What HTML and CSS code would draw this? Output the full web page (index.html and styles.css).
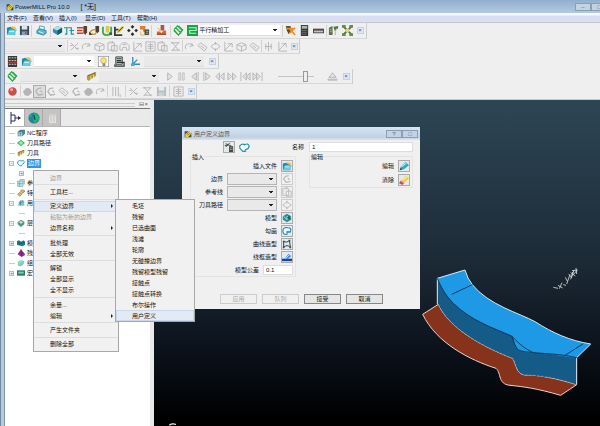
FILE: index.html
```
<!DOCTYPE html>
<html lang="zh-CN">
<head>
    <meta charset="UTF-8">
    <meta name="viewport" content="width=device-width, initial-scale=1.0">
    <title>PowerMILL Pro 10.0</title>
    <link rel="stylesheet" href="styles.css">
</head>
<body>
    <!-- Icon set -->
    <svg class="sprite">
        <symbol id="app" viewBox="0 0 12 12"><path d="M1 2h5l1 2h4v7H1z" fill="#3d474b"/><path d="M2 6l6-5 3 4-4 5-5 1z" fill="#f0d23c"/><path d="M4 6l4-3M5 8l4-3" stroke="#765c16"/></symbol>
        <symbol id="open" viewBox="0 0 12 12"><path d="M1 3l4-1 1 1h4v8H1z" fill="#218ba6"/><path d="M4 5h8l-3 6H1z" fill="#63cddd"/><path d="M6 1l4 1 1 3-4-1z" fill="#f1be55"/><path d="M3 7h6" stroke="#d4f7f9"/></symbol>
        <symbol id="save" viewBox="0 0 12 12"><path d="M1 1h10v10H1z" fill="#3b4b58"/><path d="M3 1h6v4H3z" fill="#d9e8ee"/><path d="M3 7h6v4H3z" fill="#8ba1ac"/><path d="M7 8h1v2H7z" fill="#333"/></symbol>
        <symbol id="print" viewBox="0 0 12 12"><path d="M3 5l1-4 5 1v4z" fill="#e7fbff" stroke="#4b9db5"/><path d="M1 6l3-2 7 2v3l-3 2-7-2z" fill="#58b4cf" stroke="#3a89a4"/><path d="M3 7l5 2" stroke="#e5faff"/></symbol>
        <symbol id="block" viewBox="0 0 12 12"><path d="M1 4l5-3 5 2v5l-5 3-5-3z" fill="#338dab"/><path d="M1 4l5-3 5 2-5 3z" fill="#b0e0ed"/><path d="M6 6v5l5-3V3z" fill="#175973"/></symbol>
        <symbol id="path" viewBox="0 0 12 12"><path d="M1 10h2V3h5v7h3M0 3h3M6 6h5" fill="none" stroke="#2293a4" stroke-width="1.3"/></symbol>
        <symbol id="feed" viewBox="0 0 12 12"><path d="M0 3h7M0 6h6M0 9h7" stroke="#ce3f30" stroke-width="1.5"/><path d="M7 1h4v7L9 11 7 8z" fill="#51452f"/></symbol>
        <symbol id="leads" viewBox="0 0 12 12"><path d="M7 1h4v6L9 9 7 7z" fill="#454237"/><path d="M1 10q0-5 6-5M3 9q3 3 5-1" fill="none" stroke="#d39329" stroke-width="1.5"/><path d="M0 7l4 4H0z" fill="#444"/></symbol>
        <symbol id="ball" viewBox="0 0 12 12"><path d="M1 2v6q0 3 4 3t5-4V2" fill="none" stroke="#3caf48" stroke-width="2"/><path d="M4 1h4v6L6 9 4 7z" fill="#d8c65b"/><path d="M8 8h3v3H8z" fill="#35605d"/></symbol>
        <symbol id="start" viewBox="0 0 12 12"><path d="M1 2v9h8M2 5h3" fill="none" stroke="#373d37" stroke-width="2"/><path d="M4 6l5-5 2 2-5 5-3 1z" fill="#d7bb3b"/><path d="M5 7l5-5" stroke="#40522f"/></symbol>
        <symbol id="nodes" viewBox="0 0 12 12"><path d="M6 0l2 2-2 2-2-2zM6 8l2 2-2 2-2-2zM0 6l2-2 2 2-2 2zM8 6l2-2 2 2-2 2z" fill="#292c2d"/></symbol>
        <symbol id="holder" viewBox="0 0 12 12"><path d="M1 1h6v4H1zM4 5h7v3H5z" fill="#dd8030"/><path d="M6 5h5v6H6z" fill="#47534b"/><path d="M2 7v4h4M8 7h2M8 9h2" fill="none" stroke="#e3af52"/></symbol>
        <symbol id="mill" viewBox="0 0 12 12"><path d="M5 0h4v6H5z" fill="#9b5c4b"/><path d="M1 7h3l2 2 2-3h3v5H1z" fill="#e0662f"/><path d="M1 10h10" stroke="#704737"/><path d="M2 3l3 4" stroke="#ed9d45"/></symbol>
        <symbol id="zig" viewBox="0 0 12 12"><path d="M1 5l4-4 5 5-4 5-5-6M3 3l6 6M6 1l5 5M1 6l5 5" fill="none" stroke="#25ac45" stroke-width="1.4"/></symbol>
        <symbol id="raster" viewBox="0 0 12 12"><path d="M0 0h12v12H0z" fill="#18a348"/><path d="M2 3h8v3H3v3h7" fill="none" stroke="#a8ffba" stroke-width="1.2"/></symbol>
        <symbol id="fx" viewBox="0 0 12 12"><path d="M1 1h5l1 5-3 4-2-4z" fill="#564e35"/><path d="M5 9l6-6M5 4l6 7M2 4h7" stroke="#f08a23" stroke-width="1.8"/></symbol>
        <symbol id="calc" viewBox="0 0 12 12"><path d="M2 0h8v12H2z" fill="#363a38"/><path d="M3 1h6v3H3z" fill="#aeb6ac"/><path d="M3 6h6M3 8h6M3 10h6" stroke="#949991" stroke-dasharray="1 1"/></symbol>
        <symbol id="ruler" viewBox="0 0 12 12"><path d="M0 4h12v5H0z" fill="#504747"/><path d="M1 6h10v2H1z" fill="#d5cfcf"/><path d="M2 5v2M4 5v2M6 5v2M8 5v2M10 5v2" stroke="#544d4d" stroke-width=".6"/></symbol>
        <symbol id="machine" viewBox="0 0 12 12"><path d="M1 3l4-2v10H1zM6 2l5-1v3H9v2H7z" fill="#587452"/><path d="M2 5h2M2 7h2M8 5v6" stroke="#e5af34"/></symbol>
        <symbol id="cross" viewBox="0 0 12 12"><path d="M1 1l10 10M11 1L1 11" stroke="#48664a" stroke-width="2"/><path d="M0 0h4v3H0zM8 0h4v3H8zM0 9h4v3H0zM8 9h4v3H8z" fill="#5d9047"/><path d="M4 4h4v4H4z" fill="#e5d165"/></symbol>
        <symbol id="sheet" viewBox="0 0 12 12"><path d="M1 0h10v12H1z" fill="#3d3838"/><path d="M2 2h8M2 5h8M2 9h8" stroke="#dedddd" stroke-dasharray="2 1"/><path d="M1 7h10" stroke="#a94a42"/></symbol>
        <symbol id="bulb" viewBox="0 0 12 12"><path d="M0 0h12v12H0z" fill="#fafafa" stroke="#5c6268"/><circle cx="6" cy="5" r="3.2" fill="#f4e779" stroke="#a29331" stroke-width=".6"/><path d="M5 8h3v3H5z" fill="#8e8b76"/></symbol>
        <symbol id="layers" viewBox="0 0 12 12"><path d="M2 1h7v8H2z" fill="#d4e3e0" stroke="#2c3533"/><path d="M3 3h5M3 5h5M3 7h8v4H1V9" fill="none" stroke="#2c3533" stroke-width="1.3"/></symbol>
        <symbol id="axes" viewBox="0 0 12 12"><path d="M3 1v8h8M3 9l5-5" fill="none" stroke="#378fb1" stroke-width="1.4"/><path d="M1 8h4v3H1z" fill="#4cabc9"/></symbol>
        <symbol id="tools" viewBox="0 0 12 12"><path d="M1 5l4-1v5l-2 2-2-2zM5 4l3-1v4l-2 2zM8 2l3-1v4L9 7z" fill="#bd9833"/><path d="M2 5l8-3" stroke="#6f5824"/></symbol>
        <symbol id="redball" viewBox="0 0 12 12"><circle cx="6" cy="6" r="4.6" fill="#c7504c"/><circle cx="5" cy="4" r="1.6" fill="#f0aaa3"/></symbol>

        <symbol id="g-cut" viewBox="0 0 12 12"><path d="M2 2l8 8M10 2L2 10M1 5h3M7 8h4" stroke="currentColor" fill="none"/></symbol>
        <symbol id="g-arc" viewBox="0 0 12 12"><path d="M2 9q-2-6 4-6l4 2M8 2l2 3-4 1" stroke="currentColor" fill="none"/></symbol>
        <symbol id="g-cube" viewBox="0 0 12 12"><path d="M1 4l5-2 5 2v5l-5 2-5-2zM1 4l5 2 5-2M6 6v5" stroke="currentColor" fill="none"/></symbol>
        <symbol id="g-paste" viewBox="0 0 12 12"><path d="M1 2h7v8H1zM3 0h3v2M5 5h6v6H5z" stroke="currentColor" fill="none"/></symbol>
        <symbol id="g-hat" viewBox="0 0 12 12"><path d="M1 10V5l3-3h4l3 3v5H8V7H4v3zM4 4h4" stroke="currentColor" fill="none"/></symbol>
        <symbol id="g-grid" viewBox="0 0 12 12"><path d="M1 1h10v10H1zM3 4h6M3 6h6M3 8h6M6 2v8" stroke="currentColor" fill="none"/></symbol>
        <symbol id="g-x" viewBox="0 0 12 12"><path d="M2 1l8 10M10 1L2 11M1 2h9M2 10h9" stroke="currentColor" fill="none"/></symbol>
        <symbol id="g-diamond" viewBox="0 0 12 12"><path d="M1 6l5-4 5 4-5 4zM6 1v3M6 8v3" stroke="currentColor" fill="none"/></symbol>
        <symbol id="g-link" viewBox="0 0 12 12"><path d="M1 5l3-3 7 5-3 4zM4 5l4 3" stroke="currentColor" fill="none"/></symbol>
        <symbol id="g-axis" viewBox="0 0 12 12"><path d="M2 1v10h9M2 10l8-8M5 3h5v4" stroke="currentColor" fill="none"/></symbol>
        <symbol id="g-plus" viewBox="0 0 12 12"><path d="M6 1v10M2 6h8M3 3v6M9 3v6" stroke="currentColor" fill="none"/></symbol>
        <symbol id="g-blob" viewBox="0 0 12 12"><path d="M1 6l4-4 4 1 2 4-4 4-4-1z" fill="currentColor"/></symbol>
        <symbol id="g-c" viewBox="0 0 12 12"><path d="M8 2L4 3 2 6l3 4 5-1M7 5l2 2" stroke="currentColor" stroke-width="1.4" fill="none"/></symbol>
        <symbol id="g-bars" viewBox="0 0 12 12"><path d="M2 1v10M5 1v10M8 1v10M10 9v3" stroke="currentColor" fill="none"/></symbol>
        <symbol id="p-play" viewBox="0 0 12 12"><path d="M4 2l5 4-5 4z" stroke="currentColor" fill="#e2e2e2"/></symbol>
        <symbol id="p-pause" viewBox="0 0 12 12"><path d="M3 2h2v8H3zM7 2h2v8H7z" stroke="currentColor" stroke-width=".7" fill="#e2e2e2"/></symbol>
        <symbol id="p-back" viewBox="0 0 12 12"><path d="M8 2L3 6l5 4zM10 1v10" stroke="currentColor" fill="#e2e2e2"/></symbol>
        <symbol id="p-step" viewBox="0 0 12 12"><path d="M4 2l5 4-5 4zM2 1v10" stroke="currentColor" fill="#e2e2e2"/></symbol>
        <symbol id="p-rew" viewBox="0 0 12 12"><path d="M6 2L2 6l4 4zM11 2L7 6l4 4z" stroke="currentColor" fill="#e2e2e2"/></symbol>
        <symbol id="p-ff" viewBox="0 0 12 12"><path d="M1 2l4 4-4 4zM6 2l4 4-4 4z" stroke="currentColor" fill="#e2e2e2"/></symbol>
        <symbol id="p-first" viewBox="0 0 12 12"><path d="M7 2L3 6l4 4zM11 2L7 6l4 4zM1 1v10" stroke="currentColor" fill="#e2e2e2"/></symbol>
        <symbol id="p-last" viewBox="0 0 12 12"><path d="M1 2l4 4-4 4zM5 2l4 4-4 4zM11 1v10" stroke="currentColor" fill="#e2e2e2"/></symbol>
        <symbol id="p-eject" viewBox="0 0 12 12"><path d="M2 7l4-5 4 5zM1 9h10v1H1z" stroke="currentColor" fill="#e2e2e2"/></symbol>

        <symbol id="tree" viewBox="0 0 12 12"><path d="M2 0v12M2 3h4v6M2 9h4M6 6h3" fill="none" stroke="#242760"/><path d="M9 4l3 2-3 2z" fill="#242760"/></symbol>
        <symbol id="globe" viewBox="0 0 12 12"><circle cx="6" cy="6" r="5.6" fill="#25819e"/><path d="M6 1q5 1 5 6l-4 4q-3-3-1-5zM1 4l3-3-1 5z" fill="#2bb36c"/><path d="M6 3l1 5" stroke="#123f66"/></symbol>
        <symbol id="bin" viewBox="0 0 12 12"><path d="M3 2h7v9H3z" fill="#e6e3dc"/><path d="M2 3h9M5 4v6M8 4v6" stroke="#c3bfb5"/></symbol>
        <symbol id="nc" viewBox="0 0 12 12"><path d="M1 4l4-3h7v6l-4 4H1z" fill="#4a8694"/><path d="M2 5h6v5H2z" fill="#bcdde1"/><path d="M2 7h6M5 5v5M3 3h7" stroke="#3a7484" stroke-width=".8"/></symbol>
        <symbol id="tp" viewBox="0 0 12 12"><path d="M0 6l6-5 6 5-6 5z" fill="#40bd68"/><path d="M3 6h6M6 3v6" stroke="#d6ffdf" stroke-width="1.2"/></symbol>
        <symbol id="cloud" viewBox="0 0 12 12"><path d="M3 9Q0 7 1 4q3-3 5-1 4-2 5 1 0 3-3 4-2 1-1 2-3 1-4-1z" fill="#f3feff" stroke="#2392ae" stroke-width="1.3"/></symbol>
        <symbol id="pattern" viewBox="0 0 12 12"><path d="M1 3h8v8H1zM4 1h7v7M4 3v8M1 7h8" fill="#cbe8ee" stroke="#609dad"/></symbol>
        <symbol id="feature" viewBox="0 0 12 12"><path d="M5 3l3-2 4 2-3 3zM1 8l3-3 4 2-4 4z" fill="#dbb555" stroke="#78602c" stroke-width=".8"/></symbol>
        <symbol id="ucs" viewBox="0 0 12 12"><path d="M2 5l6-4 3 2v7H4z" fill="#7cc0cd"/><path d="M1 10l8-7M5 2v8" stroke="#367d91"/></symbol>
        <symbol id="level" viewBox="0 0 12 12"><path d="M1 5l5-4 5 3v4l-5 4-5-4z" fill="#54947b"/><path d="M3 5l3-2 3 2-3 2z" fill="#d3eadc"/></symbol>
        <symbol id="model" viewBox="0 0 12 12"><path d="M0 3l3-1 3 2 4-2 2 2v5l-4 2-3-1-5-1z" fill="#187d8b"/><path d="M1 5l4 2 6-2" stroke="#0b4757" fill="none"/></symbol>
        <symbol id="stock" viewBox="0 0 12 12"><path d="M1 8l2-3 1-2 2-3 3 4 2 2 1 3-5 3z" fill="#8b2a97"/><path d="M6 3l1 7" stroke="#5f156b"/></symbol>
        <symbol id="disc" viewBox="0 0 12 12"><path d="M1 7q1-5 6-5l4 1q0 5-5 8-5 0-5-4z" fill="#78cdb8"/><path d="M3 7q1-3 5-3" stroke="#c6f2e6" fill="none"/></symbol>
        <symbol id="macro" viewBox="0 0 12 12"><path d="M0 2h12v8H0z" fill="#287b68"/><path d="M2 4h8v3H2z" fill="#84c6ac"/></symbol>

        <symbol id="wrench" viewBox="0 0 12 12"><path d="M2 2l7 3M2 6l5-5M1 4h4" stroke="#494949" fill="none" stroke-width="1.2"/><path d="M6 5h5v7H6z" fill="#494949"/><path d="M7 7h3M7 9h3" stroke="#ddd" stroke-dasharray="1 1"/></symbol>
        <symbol id="mesh" viewBox="0 0 12 12"><path d="M1 4l5-3 5 3v4l-5 3-5-3z" fill="#318c94"/><path d="M2 4l4 4V4l4 1" stroke="#b5edef" fill="none"/><path d="M6 5l3-2 1 5z" fill="#155160"/></symbol>
        <symbol id="sketch" viewBox="0 0 12 12"><path d="M6 10q-5 1-5-4t6-4q5 0 3 5H6z" fill="#e2f8ff" stroke="#2383aa" stroke-width="1.3"/><path d="M6 6h4v2H6z" fill="#36a3c8"/></symbol>
        <symbol id="curve" viewBox="0 0 12 12"><path d="M2 10V3q4 2 7-1l1 8q-4-4-8 0" fill="none" stroke="#274454" stroke-width="1.2"/><path d="M1 2h2v2H1zM8 1h2v2H8zM9 9h2v2H9zM1 9h2v2H1z" fill="#354e5d"/></symbol>
        <symbol id="wire" viewBox="0 0 12 12"><path d="M0 8h12v3H0z" fill="#1744a4"/><path d="M3 8l5-6 3 3-4 3z" fill="#438fdb"/><path d="M4 8l5-5" stroke="#d4eaff"/></symbol>
        <symbol id="pencil" viewBox="0 0 12 12"><path d="M1 11l1-4 6-6 4 4-6 5z" fill="#39a8ba"/><path d="M3 7l6-5" stroke="#aaebf1" stroke-width="1.5"/><path d="M1 11l1-3 2 2z" fill="#29424a"/></symbol>
        <symbol id="eraser" viewBox="0 0 12 12"><path d="M2 7l6-6 4 3-6 6z" fill="#f3cb42"/><path d="M2 7l4 3-2 2-4-2z" fill="#d8436c"/><path d="M4 6l5-4" stroke="#fff1a0" stroke-width="1.5"/></symbol>
    </svg>

    <div class="window">
        <header class="titlebar">
            <svg class="icon"><use href="#app"/></svg>
            <span>PowerMILL Pro 10.0</span>
            <span class="project">[ *无]</span>
            <div class="win-buttons">
                <button type="button" aria-label="最小化">–</button>
                <button type="button" aria-label="最大化">□</button>
            </div>
        </header>

        <nav class="menubar">
            <a href="#">文件(F)</a>
            <a href="#">查看(V)</a>
            <a href="#">插入(I)</a>
            <a href="#">显示(D)</a>
            <a href="#">工具(T)</a>
            <a href="#">帮助(H)</a>
        </nav>

        <div class="toolbars">
            <div class="toolbar tb-main">
                <div class="group">
                    <svg class="icon"><use href="#open"/></svg>
                    <svg class="icon"><use href="#save"/></svg>
                </div>
                <div class="group"><svg class="icon"><use href="#print"/></svg></div>
                <div class="group">
                    <svg class="icon"><use href="#block"/></svg>
                    <svg class="icon"><use href="#path"/></svg>
                    <svg class="icon"><use href="#feed"/></svg>
                    <svg class="icon"><use href="#leads"/></svg>
                    <svg class="icon"><use href="#ball"/></svg>
                    <svg class="icon"><use href="#start"/></svg>
                    <svg class="icon"><use href="#nodes"/></svg>
                    <svg class="icon"><use href="#holder"/></svg>
                </div>
                <div class="group"><svg class="icon"><use href="#mill"/></svg></div>
                <div class="group">
                    <svg class="icon"><use href="#zig"/></svg>
                    <div class="strategy">
                        <svg class="icon"><use href="#raster"/></svg>
                        <select class="combo white" aria-label="策略"><option>平行精加工</option></select>
                    </div>
                </div>
                <div class="group">
                    <svg class="icon"><use href="#fx"/></svg>
                    <svg class="icon"><use href="#calc"/></svg>
                    <svg class="icon"><use href="#ruler"/></svg>
                </div>
                <div class="group">
                    <svg class="icon"><use href="#machine"/></svg>
                    <svg class="icon"><use href="#cross"/></svg>
                </div>
                <button type="button" class="close" aria-label="关闭">×</button>
            </div>

            <div class="toolbar tb-path">
                <select class="combo" aria-label="刀具路径"><option></option></select>
                <div class="group off">
                    <svg class="icon"><use href="#g-cut"/></svg>
                    <svg class="icon"><use href="#g-arc"/></svg>
                    <svg class="icon"><use href="#g-cube"/></svg>
                    <svg class="icon"><use href="#g-paste"/></svg>
                    <svg class="icon"><use href="#g-hat"/></svg>
                    <svg class="icon"><use href="#g-axis"/></svg>
                    <svg class="icon"><use href="#g-grid"/></svg>
                    <svg class="icon"><use href="#g-paste"/></svg>
                    <svg class="icon"><use href="#g-x"/></svg>
                </div>
                <div class="group off">
                    <svg class="icon"><use href="#g-arc"/></svg>
                    <svg class="icon"><use href="#g-link"/></svg>
                    <svg class="icon"><use href="#g-diamond"/></svg>
                    <svg class="icon"><use href="#g-axis"/></svg>
                    <svg class="icon"><use href="#g-cube"/></svg>
                    <svg class="icon"><use href="#g-link"/></svg>
                </div>
                <div class="group off">
                    <svg class="icon"><use href="#g-plus"/></svg>
                    <svg class="icon"><use href="#g-axis"/></svg>
                </div>
                <button type="button" class="close" aria-label="关闭">×</button>
            </div>

            <div class="toolbar tb-level">
                <div class="group"><svg class="icon"><use href="#sheet"/></svg></div>
                <div class="group">
                    <svg class="icon"><use href="#open"/></svg>
                    <select class="combo white" aria-label="层"><option></option></select>
                </div>
                <div class="group">
                    <svg class="icon"><use href="#bulb"/></svg>
                    <svg class="icon"><use href="#layers"/></svg>
                </div>
                <div class="group">
                    <svg class="icon"><use href="#axes"/></svg>
                    <select class="combo" aria-label="用户坐标系"><option></option></select>
                </div>
                <button type="button" class="close" aria-label="关闭">×</button>
            </div>

            <div class="toolbar tb-sim">
                <div class="group"><svg class="icon"><use href="#zig"/></svg></div>
                <select class="combo" aria-label="仿真路径"><option></option></select>
                <div class="group"><svg class="icon"><use href="#tools"/></svg></div>
                <select class="combo" aria-label="仿真刀具"><option></option></select>
                <div class="group off">
                    <svg class="icon"><use href="#p-play"/></svg>
                    <svg class="icon"><use href="#p-pause"/></svg>
                    <svg class="icon"><use href="#p-back"/></svg>
                    <svg class="icon"><use href="#p-step"/></svg>
                    <svg class="icon"><use href="#p-rew"/></svg>
                    <svg class="icon"><use href="#p-ff"/></svg>
                    <svg class="icon"><use href="#p-first"/></svg>
                    <svg class="icon"><use href="#p-last"/></svg>
                </div>
                <input type="range" class="speed" aria-label="速度" min="0" max="100" value="80">
                <div class="group off"><svg class="icon"><use href="#p-eject"/></svg></div>
                <button type="button" class="close" aria-label="关闭">×</button>
            </div>

            <div class="toolbar tb-view">
                <div class="group"><svg class="icon"><use href="#redball"/></svg></div>
                <div class="group off">
                    <svg class="icon"><use href="#g-blob"/></svg>
                    <svg class="icon pressed"><use href="#g-c"/></svg>
                    <svg class="icon"><use href="#g-c"/></svg>
                    <svg class="icon"><use href="#g-link"/></svg>
                    <svg class="icon"><use href="#g-c"/></svg>
                    <svg class="icon"><use href="#g-blob"/></svg>
                    <svg class="icon"><use href="#g-arc"/></svg>
                </div>
                <div class="group off"><svg class="icon"><use href="#g-bars"/></svg></div>
                <div class="group off">
                    <svg class="icon"><use href="#g-cut"/></svg>
                    <svg class="icon"><use href="#g-x"/></svg>
                    <svg class="icon"><use href="#save"/></svg>
                </div>
                <div class="group off"><svg class="icon"><use href="#g-grid"/></svg></div>
                <button type="button" class="close" aria-label="关闭">×</button>
            </div>
        </div>

        <main class="workspace">
            <aside class="explorer">
                <div class="grip"><span>⊟×</span></div>
                <div class="tabs">
                    <button type="button" class="tab active" aria-label="浏览器"><svg class="icon"><use href="#tree"/></svg></button>
                    <button type="button" class="tab" aria-label="网页"><svg class="icon"><use href="#globe"/></svg></button>
                    <button type="button" class="tab" aria-label="回收站"><svg class="icon"><use href="#bin"/></svg></button>
                </div>
                <ul class="tree">
                    <li><i></i><svg class="icon"><use href="#nc"/></svg><span>NC程序</span></li>
                    <li><i></i><svg class="icon"><use href="#tp"/></svg><span>刀具路径</span></li>
                    <li><i></i><svg class="icon"><use href="#tools"/></svg><span>刀具</span></li>
                    <li><i class="box">-</i><svg class="icon"><use href="#cloud"/></svg><span class="selected">边界</span></li>
                    <li class="child"><i class="box">+</i></li>
                    <li><i></i><svg class="icon"><use href="#pattern"/></svg><span>参考线</span></li>
                    <li><i></i><svg class="icon"><use href="#feature"/></svg><span>特征</span></li>
                    <li><i class="box">-</i><svg class="icon"><use href="#ucs"/></svg><span>用户</span></li>
                    <li class="child"><i></i></li>
                    <li><i class="box">-</i><svg class="icon"><use href="#level"/></svg><span>层和</span></li>
                    <li class="child"><i></i></li>
                    <li><i class="box">+</i><svg class="icon"><use href="#model"/></svg><span>模型</span></li>
                    <li><i></i><svg class="icon"><use href="#stock"/></svg><span>残留</span></li>
                    <li><i></i><svg class="icon"><use href="#disc"/></svg><span>组</span></li>
                    <li><i class="box">+</i><svg class="icon"><use href="#macro"/></svg><span>宏</span></li>
                </ul>
            </aside>

            <section class="view">
                <!-- Machined part -->
                <svg class="part" viewBox="0 0 570 528">
                    <path d="M38 193L85 163C120 240 230 295 308 325C320 345 318 372 345 375C390 375 440 385 500 404L452 436C380 415 340 410 300 406C262 402 275 370 258 355C180 330 80 280 38 193Z" fill="#87321b" stroke="#e8d5cc" stroke-width="3"/>
                    <path d="M82 85C90 105 105 135 130 160C180 210 250 235 305 258C312 275 315 295 330 302C370 312 440 308 500 323V404C440 380 380 378 345 375C320 372 320 345 308 325C230 295 120 240 85 163Z" fill="#155b88"/>
                    <path d="M82 85V163M500 323V404" stroke="#e9f3f8" stroke-width="3"/>
                    <path d="M85 163C120 240 230 295 308 325C320 345 318 372 345 375C390 375 440 385 500 404" fill="none" stroke="#a8a39f" stroke-width="2" stroke-dasharray="7 5"/>
                    <path d="M82 85L165 60Q172 86 187 104C235 165 330 190 375 215C430 250 480 272 542 282L500 323C440 320 410 305 370 310C345 306 335 306 325 300C312 285 312 265 305 258C250 235 180 210 130 160C105 135 90 105 82 85Z" fill="#1d99e5"/>
                    <path d="M82 85L165 60Q172 86 187 104C235 165 330 190 375 215C430 250 480 272 542 282L500 323" fill="none" stroke="#d3edf9" stroke-width="3"/>
                    <path d="M125 133L187 104M305 258C330 285 350 300 375 310M462 318L520 281M82 85C90 105 105 135 130 160C180 210 250 235 305 258C312 275 315 295 330 302C370 312 440 308 500 323" fill="none" stroke="#123d5d" stroke-width="3"/>
                    <!-- Axis labels -->
                    <path d="M430 112l14 3M444 106l14 8M456 98l-8 18M460 104l8 2M466 82l6 12M480 74l-10 28M476 72l10 12M488 66l-6 22M482 68l14 10M492 60l-6 20M486 62l16-2M490 74l12-14M498 54l2 18" fill="none" stroke="#d8dcde" stroke-width="2.5"/>
                </svg>
                <svg class="marker" viewBox="0 0 10 4"><path d="M0 3q4-3 9-1" stroke="#eee" stroke-width="1.5" fill="none"/></svg>

                <form class="dialog">
                    <div class="dialog-title">
                        <svg class="icon"><use href="#app"/></svg>
                        <span>用户定义边界</span>
                        <div class="win-buttons">
                            <button type="button" aria-label="帮助">?</button>
                            <button type="button" aria-label="关闭">□</button>
                        </div>
                    </div>
                    <div class="dialog-head">
                        <button type="button" class="tool" aria-label="设置"><svg class="icon"><use href="#wrench"/></svg></button>
                        <svg class="icon"><use href="#cloud"/></svg>
                        <label for="name">名称</label>
                        <input type="text" id="name" value="1">
                    </div>
                    <div class="dialog-body">
                        <fieldset>
                            <legend>插入</legend>
                            <div class="field"><span>插入文件</span><button type="button" class="tool" aria-label="插入文件"><svg class="icon"><use href="#open"/></svg></button></div>
                            <div class="field"><label for="boundary">边界</label><select id="boundary" class="combo"><option></option></select><button type="button" class="tool off" aria-label="插入边界" disabled><svg class="icon"><use href="#g-c"/></svg></button></div>
                            <div class="field"><label for="pattern-sel">参考线</label><select id="pattern-sel" class="combo"><option></option></select><button type="button" class="tool off" aria-label="插入参考线" disabled><svg class="icon"><use href="#g-paste"/></svg></button></div>
                            <div class="field"><label for="toolpath">刀具路径</label><select id="toolpath" class="combo"><option></option></select><button type="button" class="tool off" aria-label="插入刀具路径" disabled><svg class="icon"><use href="#g-diamond"/></svg></button></div>
                            <div class="field"><span>模型</span><button type="button" class="tool" aria-label="模型"><svg class="icon"><use href="#mesh"/></svg></button></div>
                            <div class="field"><span>勾画</span><button type="button" class="tool" aria-label="勾画"><svg class="icon"><use href="#sketch"/></svg></button></div>
                            <div class="field"><span>曲线造型</span><button type="button" class="tool" aria-label="曲线造型"><svg class="icon"><use href="#curve"/></svg></button></div>
                            <div class="field"><span>线框造型</span><button type="button" class="tool" aria-label="线框造型"><svg class="icon"><use href="#wire"/></svg></button></div>
                            <div class="field"><label for="tolerance">模型公差</label><input type="text" id="tolerance" value="0.1"></div>
                        </fieldset>
                        <fieldset class="edit">
                            <legend>编辑</legend>
                            <div class="field"><span>编辑</span><button type="button" class="tool" aria-label="编辑"><svg class="icon"><use href="#pencil"/></svg></button></div>
                            <div class="field"><span>清除</span><button type="button" class="tool" aria-label="清除"><svg class="icon"><use href="#eraser"/></svg></button></div>
                        </fieldset>
                    </div>
                    <div class="dialog-buttons">
                        <button type="button" disabled>应用</button>
                        <button type="button" disabled>队列</button>
                        <button type="button">接受</button>
                        <button type="button">取消</button>
                    </div>
                </form>
            </section>

            <div class="menu context">
                <button type="button" disabled>边界</button>
                <hr>
                <button type="button">工具栏...</button>
                <hr>
                <button type="button" class="sub hover">定义边界</button>
                <button type="button" disabled>粘贴为新的边界</button>
                <button type="button" class="sub">边界名称</button>
                <hr>
                <button type="button">批处理</button>
                <button type="button">全部无效</button>
                <hr>
                <button type="button">解锁</button>
                <button type="button">全部显示</button>
                <button type="button">全不显示</button>
                <hr>
                <button type="button">余量...</button>
                <button type="button" class="sub">编辑</button>
                <hr>
                <button type="button">产生文件夹</button>
                <hr>
                <button type="button">删除全部</button>
            </div>

            <div class="menu submenu">
                <button type="button">毛坯</button>
                <button type="button">残留</button>
                <button type="button">已选曲面</button>
                <button type="button">浅滩</button>
                <button type="button">轮廓</button>
                <button type="button">无碰撞边界</button>
                <button type="button">残留模型残留</button>
                <button type="button">接触点</button>
                <button type="button">接触点转换</button>
                <button type="button">布尔操作</button>
                <button type="button" class="hover">用户定义</button>
            </div>
        </main>
    </div>
</body>
</html>
```

FILE: styles.css
```
* {
    box-sizing: border-box;
}

body {
    margin: 0;
    font-family: "Liberation Sans", "Noto Sans CJK SC", sans-serif;
    font-size: 6px;
    line-height: 10px;
    color: #111;
    background-color: #efefef;
}

button,
input,
select {
    font: inherit;
    color: inherit;
    margin: 0;
    padding: 0;
}

.sprite {
    display: none;
}

.icon {
    display: block;
    flex: none;
    width: 11px;
    height: 11px;
}

.window {
    display: flex;
    flex-direction: column;
    min-height: 100vh;
    padding-left: 5px;
    background: linear-gradient(to right, #6f8aa3 1px, #b9cbdb 1px, #b9cbdb 4px, #8195a6 4px, #8195a6 5px, #efefef 5px);
}

/* title and menu */
.titlebar {
    display: flex;
    align-items: center;
    height: 13px;
    margin-left: -5px;
    padding-left: 6px;
    gap: 1px;
    overflow: hidden;
    background: linear-gradient(#91afce, #b4cae1);
}

.titlebar .icon {
    width: 8px;
    height: 8px;
}

.project {
    margin-left: 10px;
    font-size: 7px;
}

.win-buttons {
    display: flex;
    margin-left: auto;
}

.titlebar .win-buttons {
    margin-right: -7px;
}

.win-buttons button {
    width: 16px;
    height: 8px;
    line-height: 6px;
    color: #667;
    background-color: #c3d3e3;
    border: 1px solid #8b9fb4;
}

.menubar {
    display: flex;
    height: 10px;
    padding-left: 2px;
    background: linear-gradient(#f4f7fd 2px, #d9dff0 3px);
    border-bottom: 1px solid #c4c8ce;
}

.menubar a {
    width: 26px;
    color: #111;
    text-decoration: none;
}

/* toolbars */
.toolbars {
    display: flex;
    flex-direction: column;
    align-items: flex-start;
    border-bottom: 1px solid #c5cacd;
}

.toolbar {
    display: grid;
    align-items: center;
    height: 15px;
    border-right: 1px solid #ccc;
    border-bottom: 1px solid #d6d6d6;
}

.toolbar:first-child {
    height: 16px;
}

.tb-main {
    grid-template-columns: 26px 19px 101px 19px 112px 44px 28px 12px;
}

.tb-path {
    grid-template-columns: 62px 115px 79px 28px 10px;
}

.tb-level {
    grid-template-columns: 15px 75px 33px 78px 12px;
}

.tb-sim {
    grid-template-columns: 15px 64px 15px 64px 101px 60px 16px 12px;
}

.tb-view {
    grid-template-columns: 15px 87px 18px 44px 17px 10px;
}

.group {
    display: flex;
    align-items: center;
    justify-content: space-around;
    height: 12px;
    border-left: 1px solid #d2d2d2;
}

.group:first-child,
.tb-sim .group,
.tb-level .group {
    border-left: none;
}

.off {
    color: #b5b5b5;
}

.off .icon use[href="#save"] {
    opacity: 0.3;
}

.pressed {
    background-color: #ddd;
    outline: 1px solid #aaa;
}

.combo {
    appearance: none;
    width: 60px;
    height: 11px;
    border: none;
    border-bottom: 1px solid #ddd;
    border-radius: 0;
    background: linear-gradient(#222, #222) right 3px top 4px / 4px 1px no-repeat, linear-gradient(#222, #222) right 4px top 5px / 2px 1px no-repeat, #e9e9e9;
}

.combo.white {
    background-color: #fff;
}

.strategy {
    display: flex;
    width: 93px;
    background-color: #fff;
}

.strategy .combo {
    flex: 1;
    width: auto;
    padding-left: 1px;
}

.close {
    justify-self: center;
    width: 7px;
    height: 7px;
    line-height: 5px;
    color: #3557a0;
    background-color: #dfe9f5;
    border: 1px solid #c3d3e6;
}

.speed {
    appearance: none;
    width: 36px;
    height: 12px;
    margin-left: 14px;
    background: linear-gradient(#c4c4c4, #c4c4c4) center / 100% 1px no-repeat;
}

.speed::-webkit-slider-thumb {
    appearance: none;
    width: 5px;
    height: 11px;
    background-color: #eee;
    border: 1px solid #999;
}

/* explorer */
.workspace {
    position: relative;
    display: flex;
    flex: 1;
}

.explorer {
    flex: none;
    width: 149px;
    background-color: #fff;
    border-right: 4px solid #e9e9e9;
}

.grip {
    height: 9px;
    padding-right: 2px;
    line-height: 8px;
    text-align: right;
    background: linear-gradient(transparent 3px, #ccc 3px, #ccc 4px, transparent 4px, transparent 6px, #ccc 6px, #ccc 7px, transparent 7px) left / 130px 100% no-repeat #efefef;
    border-bottom: 1px solid #777;
}

.grip span {
    color: #555;
}

.tabs {
    display: flex;
    height: 18px;
    background-color: #eaeaea;
    border-bottom: 1px solid #b5b5b5;
}

.tab {
    display: flex;
    align-items: center;
    justify-content: center;
    width: 18px;
    background-color: #c4c4c4;
    border: none;
    border-right: 1px solid #aaa;
}

.tab.active {
    width: 20px;
    background-color: #fff;
}

.tab .icon {
    width: 12px;
    height: 12px;
}

.tree {
    margin: 0;
    padding: 1px 0 0 4px;
    list-style: none;
}

.tree li {
    display: flex;
    align-items: center;
    height: 10px;
    gap: 1px;
}

.tree .icon {
    width: 10px;
    height: 8px;
}

.tree i {
    width: 6px;
    height: 1px;
    background-color: #ccc;
}

.tree .box {
    width: 5px;
    height: 5px;
    margin-right: 1px;
    font-style: normal;
    line-height: 3px;
    text-align: center;
    color: #777;
    background-color: #f6f6f6;
    border: 1px solid #bbb;
}

.tree .child {
    padding-left: 10px;
}

.tree .selected {
    padding: 0 1px;
    line-height: 9px;
    color: #fff;
    background-color: #3296e8;
}

/* 3D view */
.view {
    position: relative;
    flex: 1;
    overflow: hidden;
    background: linear-gradient(#2d4655, #1c2a36 50%, #0c131d 75%, #000 98%);
}

.part {
    position: absolute;
    left: 256px;
    top: 150px;
    width: 190px;
    height: 176px;
}

.marker {
    position: absolute;
    left: 14px;
    bottom: 0;
    width: 10px;
    height: 3px;
}

/* dialog */
.dialog {
    position: absolute;
    left: 28px;
    top: 27px;
    width: 238px;
    padding-bottom: 5px;
    background-color: #f0f0f0;
}

.dialog-title {
    display: flex;
    align-items: center;
    height: 13px;
    padding: 0 2px;
    gap: 2px;
    color: #555;
    background: linear-gradient(#d8e5f1, #bfd2e4 80%, #dbe5ee);
}

.dialog-title .icon {
    width: 8px;
    height: 8px;
}

.dialog-head {
    display: flex;
    align-items: center;
    height: 14px;
    padding: 0 7px 0 41px;
}

.dialog-head > .icon {
    margin-left: 4px;
}

.dialog-head label {
    margin-left: 42px;
    margin-right: 5px;
}

.dialog input[type="text"] {
    min-width: 0;
    height: 10px;
    padding-left: 2px;
    background-color: #fff;
    border: 1px solid #ddd;
}

#name {
    flex: 1;
}

.dialog-body {
    display: flex;
    align-items: flex-start;
    gap: 13px;
    padding: 0 7px 0 8px;
}

fieldset {
    width: 106px;
    min-width: 0;
    margin: 0;
    padding: 0 2px 0 0;
    border: 1px solid #e4e4e4;
}

fieldset.edit {
    flex: 1;
    width: auto;
}

legend {
    height: 5px;
    margin-left: 1px;
    padding: 0;
    line-height: 6px;
}

.field {
    display: flex;
    align-items: center;
    justify-content: flex-end;
    height: 13px;
    gap: 4px;
}

.edit .field {
    height: 14px;
}

.field .combo {
    width: 50px;
    height: 12px;
    border: 1px solid #b5b5b5;
}

.field input {
    width: 30px;
}

.tool {
    flex: none;
    display: flex;
    align-items: center;
    justify-content: center;
    width: 12px;
    height: 12px;
    background-color: #e4e9ec;
    border: 1px solid #aaa;
}

.tool.off {
    border-color: #ccc;
    background-color: #f0f0f0;
}

.tool .icon {
    width: 10px;
    height: 10px;
}

.dialog-buttons {
    display: flex;
    justify-content: flex-start;
    gap: 5px;
    margin-top: 17px;
    padding-left: 38px;
}

.dialog-buttons button {
    width: 37px;
    height: 10px;
    line-height: 8px;
    background-color: #e6e6e6;
    border: 1px solid #888;
}

.dialog-buttons button:disabled {
    color: #aaa;
    background-color: #f0f0f0;
    border-color: #ccc;
}

/* popup menus */
.menu {
    position: absolute;
    display: flex;
    flex-direction: column;
    background-color: #f1f1f1;
    border: 1px solid #a8a8a8;
}

.menu button {
    display: flex;
    align-items: center;
    height: 11px;
    padding: 0 5px 0 16px;
    background: none;
    border: none;
}

.menu button:disabled {
    color: #999;
}

.menu .hover {
    background-color: #e2eaf6;
    outline: 1px solid #c9d8ec;
    outline-offset: -1px;
}

.menu hr {
    flex: 1;
    width: 100%;
    margin: 0;
    border: none;
    background: linear-gradient(#ddd, #ddd) center / 100% 1px no-repeat;
}

.menu .sub::after {
    content: "";
    margin-left: auto;
    border: 2px solid transparent;
    border-left-color: #222;
    border-right: none;
}

.context {
    left: 28px;
    top: 70px;
    width: 86px;
    min-height: 182px;
    padding: 1px 0;
}

.submenu {
    left: 110px;
    top: 99px;
    width: 80px;
}
```
